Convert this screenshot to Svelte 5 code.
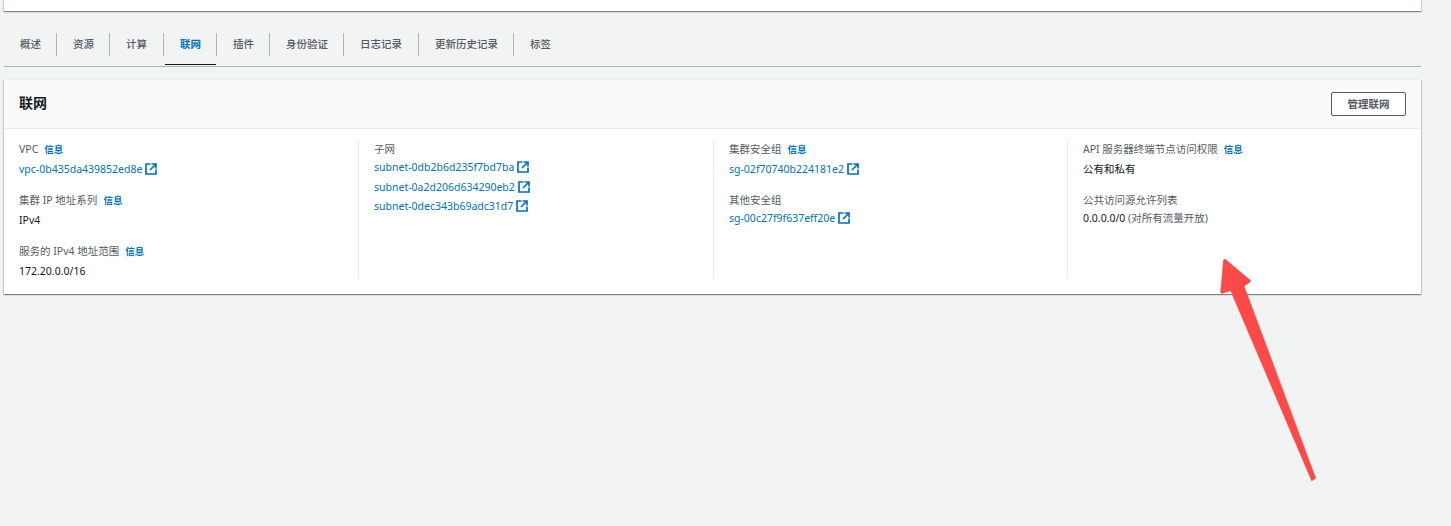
<script>
  const tabs = [
    { label: '概述', w: 53 }, { label: '资源', w: 53 }, { label: '计算', w: 54 }, { label: '联网', w: 53, active: true },
    { label: '插件', w: 53 }, { label: '身份验证', w: 74 }, { label: '日志记录', w: 75 }, { label: '更新历史记录', w: 95 }, { label: '标签', w: 53 }
  ];
  const subnets = ['subnet-0db2b6d235f7bd7ba', 'subnet-0a2d206d634290eb2', 'subnet-0dec343b69adc31d7'];
</script>

{#snippet ext()}
  <svg class="ext" viewBox="0 0 12 12" width="12" height="12" aria-hidden="true">
    <path d="M5.5 1H1v10h10V6.5M6.5 1H11v4.5M11 1 5 7" fill="none" stroke="#0073bb" stroke-width="1.7"/>
  </svg>
{/snippet}

{#snippet label(text, info)}
  <div class="label">{text}{#if info}<a class="info">信息</a>{/if}</div>
{/snippet}

{#snippet link(text)}
  <div class="value"><a class="link">{text}</a>{@render ext()}</div>
{/snippet}

<div class="page">
  <div class="top-card"></div>
  <nav class="tabs">
    {#each tabs as t, i}
      <div class="tab" class:active={t.active} class:last={i === tabs.length - 1} style:width="{t.w}px">{t.label}</div>
    {/each}
  </nav>
  <section class="panel">
    <header class="head">
      <h2>联网</h2>
      <button>管理联网</button>
    </header>
    <div class="body">
      <div class="col first">
        <div class="item">{@render label('VPC', true)}{@render link('vpc-0b435da439852ed8e')}</div>
        <div class="item">{@render label('集群 IP 地址系列', true)}<div class="value">IPv4</div></div>
        <div class="item">{@render label('服务的 IPv4 地址范围', true)}<div class="value">172.20.0.0/16</div></div>
      </div>
      <div class="col">
        {@render label('子网', false)}
        <div class="subnets">
          {#each subnets as s}
            <div class="subnet"><a class="link">{s}</a>{@render ext()}</div>
          {/each}
        </div>
      </div>
      <div class="col">
        <div class="item">{@render label('集群安全组', true)}{@render link('sg-02f70740b224181e2')}</div>
        <div class="item tight">{@render label('其他安全组', false)}{@render link('sg-00c27f9f637eff20e')}</div>
      </div>
      <div class="col">
        <div class="item">{@render label('API 服务器终端节点访问权限', true)}<div class="value">公有和私有</div></div>
        <div class="item tight">{@render label('公共访问源允许列表', false)}<div class="value">0.0.0.0/0 <span class="muted">(对所有流量开放)</span></div></div>
      </div>
    </div>
  </section>
  <svg class="arrow" viewBox="0 0 1451 526" width="1451" height="526" aria-hidden="true">
    <path d="M1225 259 L1250.5 280.5 L1250 282 L1244 286 L1315.7 478.3 L1311.7 480.7 L1230.7 290.7 L1221.5 293.5 L1220.7 292 L1223.5 260 Z" fill="#fb4a47" stroke="#fb4a47" stroke-width=".6" stroke-linejoin="round"/>
  </svg>
</div>

<style>
  :global(body) { margin: 0; background: #f2f3f3; }
  .page {
    position: relative;
    height: 526px;
    overflow: hidden;
    padding: 0 30px 0 4px;
    font: 10.5px/14px "Noto Sans", "Noto Sans CJK SC", sans-serif;
    color: #16191f;
    background: #f2f3f3;
  }
  .top-card {
    height: 11px;
    background: #fff;
    box-shadow: 0 1px 1px 0 rgba(0, 28, 36, .3), 1px 1px 1px 0 rgba(0, 28, 36, .15), -1px 1px 1px 0 rgba(0, 28, 36, .15);
  }
  .tabs {
    display: flex;
    margin-top: 22px;
    height: 33px;
    border-bottom: 1px solid #aab7b8;
  }
  .tab {
    position: relative;
    flex: none;
    box-sizing: border-box;
    height: 23px;
    line-height: 22px;
    padding-left: 16px;
    color: #545b64;
    font-weight: 500;
    border-right: 1px solid #aab7b8;
    white-space: nowrap;
  }
  .tab.last { border-right: 0; }
  .tab.active { color: #0073bb; font-weight: 600; }
  .tab.active::after {
    content: "";
    position: absolute;
    left: 1px;
    right: 0;
    top: 31px;
    height: 1px;
    background: #16191f;
  }
  .panel {
    margin-top: 12px;
    height: 215px;
    background: #fff;
    box-shadow: 0 1px 1px 0 rgba(0, 28, 36, .3), 1px 1px 1px 0 rgba(0, 28, 36, .15), -1px 1px 1px 0 rgba(0, 28, 36, .15);
    border-top: 1px solid #eaeded;
    box-sizing: border-box;
  }
  .head {
    display: flex;
    align-items: center;
    justify-content: space-between;
    height: 49px;
    box-sizing: border-box;
    padding: 0 15px;
    background: #fafafa;
    border-bottom: 1px solid #eaeded;
  }
  h2 { margin: -3px 0 0; font-size: 14px; line-height: 20px; font-weight: 600; color: #16191f; }
  button {
    width: 75px;
    height: 24px;
    padding: 0;
    font: 600 10.5px/14px "Noto Sans", "Noto Sans CJK SC", sans-serif;
    color: #545b64;
    background: #fff;
    border: 1px solid #545b64;
    border-radius: 2px;
  }
  .body {
    display: grid;
    grid-template-columns: 339px 355px 354px 1fr;
    margin: 12px 15px 0;
  }
  .col {
    height: 138px;
    padding-left: 15px;
    border-left: 1px solid #eaeded;
    box-sizing: border-box;
  }
  .col.first { padding-left: 0; border-left: 0; }
  .item { margin-bottom: 15px; }
  .label { color: #545b64; height: 16px; line-height: 16px; white-space: nowrap; }
  .info { margin-left: 6px; font-size: 9.5px; font-weight: 700; color: #0073bb; }
  .value { margin-top: 4px; height: 16px; line-height: 16px; white-space: nowrap; }
  .item.tight .value { margin-top: 2px; }
  .link { color: #0073bb; }
  .ext { margin-left: 3px; vertical-align: -2px; }
  .muted { color: #545b64; }
  .subnets { margin-top: 1px; }
  .subnet { height: 19.5px; line-height: 19.5px; white-space: nowrap; }
  .arrow { position: absolute; left: 0; top: 0; pointer-events: none; }
</style>
